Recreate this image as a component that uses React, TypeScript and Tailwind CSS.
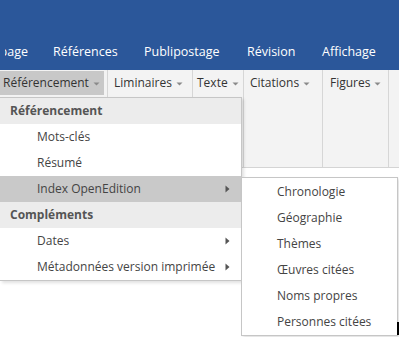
import React from "react";

const Caret = () => (
  <svg width="7" height="4" viewBox="0 0 7 4" className="ml-[4px] mt-[1px]">
    <path d="M0.5 0.5 L6.5 0.5 L3.5 3.5 Z" fill="#8a8a8a" />
  </svg>
);

const Arrow = () => (
  <svg width="5" height="8" viewBox="0 0 5 8">
    <path d="M0.5 0.5 L4.5 4 L0.5 7.5 Z" fill="#555" />
  </svg>
);

const Sep = () => <div className="w-px self-stretch bg-[#d6d6d6]" />;

export default function App() {
  const font = { fontFamily: '"Open Sans", "Noto Sans", sans-serif' };
  return (
    <div className="relative w-[399px] h-[337px] overflow-hidden bg-white" style={font}>
      {/* Title / tabs bar */}
      <div className="h-[70px] bg-[#2b579a] flex items-start pt-[42px] text-white text-[12.5px] leading-[20px] whitespace-nowrap">
        <div className="ml-[5px] w-[23px] overflow-hidden flex justify-end">
          <span>Mise en page</span>
        </div>
        <span className="ml-[25px] w-[91px]">Références</span>
        <span className="w-[103px]">Publipostage</span>
        <span className="w-[75px]">Révision</span>
        <span>Affichage</span>
      </div>

      {/* Ribbon */}
      <div className="h-[98px] bg-[#f3f3f3] border-b border-[#d4d4d4] flex text-[12px] text-[#333] whitespace-nowrap">
        <div className="w-[107px] pt-[1px]">
          <div className="h-[24px] w-[104px] bg-[#c8c8c8] flex items-center pl-[3px]">
            Référencement
            <Caret />
          </div>
        </div>
        <Sep />
        <div className="w-[84px] pt-[1px]">
          <div className="h-[24px] flex items-center pl-[6px]">
            Liminaires
            <Caret />
          </div>
        </div>
        <Sep />
        <div className="w-[50px] pt-[1px]">
          <div className="h-[24px] flex items-center pl-[4px]">
            Texte
            <Caret />
          </div>
        </div>
        <Sep />
        <div className="w-[78px] pt-[1px]">
          <div className="h-[24px] flex items-center pl-[6px]">
            Citations
            <Caret />
          </div>
        </div>
        <Sep />
        <div className="w-[65px] pt-[1px]">
          <div className="h-[24px] flex items-center pl-[7px]">
            Figures
            <Caret />
          </div>
        </div>
        <Sep />
      </div>

      {/* Main dropdown menu */}
      <div className="absolute left-0 top-[97px] w-[242px] bg-white border border-l-0 border-[#c6c6c6] shadow-[2px_2px_3px_rgba(0,0,0,0.12)] text-[12px] text-[#444] whitespace-nowrap">
        <div className="h-[26px] bg-[#ececec] flex items-center pl-[10px] font-bold text-[#555]">
          Référencement
        </div>
        <div className="h-[26px] flex items-center pl-[37px]">Mots-clés</div>
        <div className="h-[26px] flex items-center pl-[37px]">Résumé</div>
        <div className="h-[26px] bg-[#c9c9c9] flex items-center pl-[37px] pr-[11px] justify-between">
          <span>Index OpenEdition</span>
          <Arrow />
        </div>
        <div className="h-[26px] bg-[#ececec] flex items-center pl-[10px] font-bold text-[#555]">
          Compléments
        </div>
        <div className="h-[26px] flex items-center pl-[37px] pr-[11px] justify-between">
          <span>Dates</span>
          <Arrow />
        </div>
        <div className="h-[26px] flex items-center pl-[37px] pr-[11px] justify-between">
          <span>Métadonnées version imprimée</span>
          <Arrow />
        </div>
      </div>

      {/* Submenu */}
      <div className="absolute left-[241px] top-[177px] w-[157px] h-[159px] bg-white border border-[#c6c6c6] shadow-[2px_2px_3px_rgba(0,0,0,0.12)] text-[12px] text-[#444] whitespace-nowrap pt-[1px]">
        {["Chronologie", "Géographie", "Thèmes", "Œuvres citées", "Noms propres", "Personnes citées"].map((t) => (
          <div key={t} className="h-[26px] flex items-center pl-[35px]">
            {t}
          </div>
        ))}
      </div>

      {/* cursor fragment */}
      <div className="absolute left-[397px] top-[322px] w-[2px] h-[13px] bg-black" />
    </div>
  );
}
